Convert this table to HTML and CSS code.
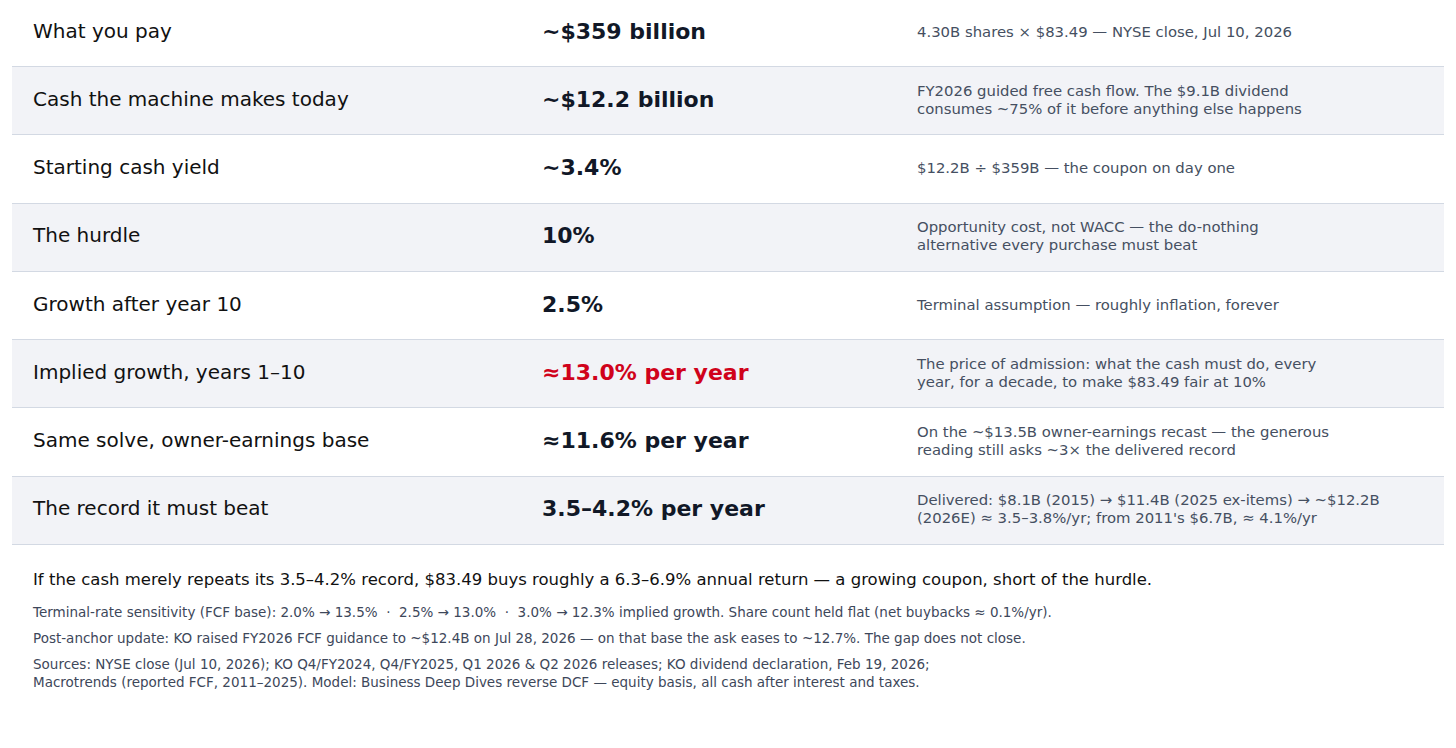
FILE: index.html
```html
<!DOCTYPE html>
<html>
<head>
<meta charset="utf-8">
<link rel="stylesheet" href="styles.css">
</head>
<body>
<div class="page">
  <div class="table">
    <div class="row first">
      <div class="label">What you pay</div>
      <div class="value">~$359 billion</div>
      <div class="note">4.30B shares × $83.49 — NYSE close, Jul 10, 2026</div>
    </div>
    <div class="row alt">
      <div class="label">Cash the machine makes today</div>
      <div class="value">~$12.2 billion</div>
      <div class="note">FY2026 guided free cash flow. The $9.1B dividend<br>consumes ~75% of it before anything else happens</div>
    </div>
    <div class="row">
      <div class="label">Starting cash yield</div>
      <div class="value">~3.4%</div>
      <div class="note">$12.2B ÷ $359B — the coupon on day one</div>
    </div>
    <div class="row alt">
      <div class="label">The hurdle</div>
      <div class="value">10%</div>
      <div class="note">Opportunity cost, not WACC — the do-nothing<br>alternative every purchase must beat</div>
    </div>
    <div class="row">
      <div class="label">Growth after year 10</div>
      <div class="value">2.5%</div>
      <div class="note">Terminal assumption — roughly inflation, forever</div>
    </div>
    <div class="row alt">
      <div class="label">Implied growth, years 1–10</div>
      <div class="value red">≈13.0% per year</div>
      <div class="note">The price of admission: what the cash must do, every<br>year, for a decade, to make $83.49 fair at 10%</div>
    </div>
    <div class="row">
      <div class="label">Same solve, owner-earnings base</div>
      <div class="value">≈11.6% per year</div>
      <div class="note">On the ~$13.5B owner-earnings recast — the generous<br>reading still asks ~3× the delivered record</div>
    </div>
    <div class="row alt">
      <div class="label">The record it must beat</div>
      <div class="value">3.5–4.2% per year</div>
      <div class="note">Delivered: $8.1B (2015) → $11.4B (2025 ex-items) → ~$12.2B<br>(2026E) ≈ 3.5–3.8%/yr; from 2011's $6.7B, ≈ 4.1%/yr</div>
    </div>
  </div>
  <div class="footer">
    <p class="summary">If the cash merely repeats its 3.5–4.2% record, $83.49 buys roughly a 6.3–6.9% annual return — a growing coupon, short of the hurdle.</p>
    <p class="fine">Terminal-rate sensitivity (FCF base): 2.0% → 13.5% &nbsp;·&nbsp; 2.5% → 13.0% &nbsp;·&nbsp; 3.0% → 12.3% implied growth. Share count held flat (net buybacks ≈ 0.1%/yr).</p>
    <p class="fine">Post-anchor update: KO raised FY2026 FCF guidance to ~$12.4B on Jul 28, 2026 — on that base the ask eases to ~12.7%. The gap does not close.</p>
    <p class="fine">Sources: NYSE close (Jul 10, 2026); KO Q4/FY2024, Q4/FY2025, Q1 2026 &amp; Q2 2026 releases; KO dividend declaration, Feb 19, 2026;<br>Macrotrends (reported FCF, 2011–2025). Model: Business Deep Dives reverse DCF — equity basis, all cash after interest and taxes.</p>
  </div>
</div>
</body>
</html>
```
FILE: styles.css
```css
html, body {
  margin: 0;
  padding: 0;
  background: #ffffff;
}
body {
  font-family: "DejaVu Sans", sans-serif;
}
.page {
  padding: 0 12px;
}
.table {
  display: flex;
  flex-direction: column;
}
.row {
  display: grid;
  grid-template-columns: 509px 375px 1fr;
  align-items: center;
  height: 67.3px;
  border-bottom: 1px solid #d3d9e3;
}
.row.first {
  height: 66px;
}
.row.alt {
  background: #f2f3f7;
}
.label {
  padding-left: 21px;
  font-size: 20px;
  color: #111111;
  padding-bottom: 4px;
}
.value {
  padding-left: 21px;
  font-size: 22px;
  font-weight: bold;
  color: #111827;
  padding-bottom: 3px;
}
.value.red {
  color: #d0021b;
}
.note {
  padding-left: 21px;
  font-size: 14.85px;
  line-height: 18px;
  color: #454f61;
  padding-bottom: 2px;
}
.footer {
  padding: 25px 21px 0;
}
.summary {
  margin: 0 0 13px;
  font-size: 16.5px;
  line-height: 20px;
  color: #111111;
}
.fine {
  margin: 0 0 8px;
  font-size: 13.5px;
  line-height: 18px;
  color: #3d475a;
}
```
